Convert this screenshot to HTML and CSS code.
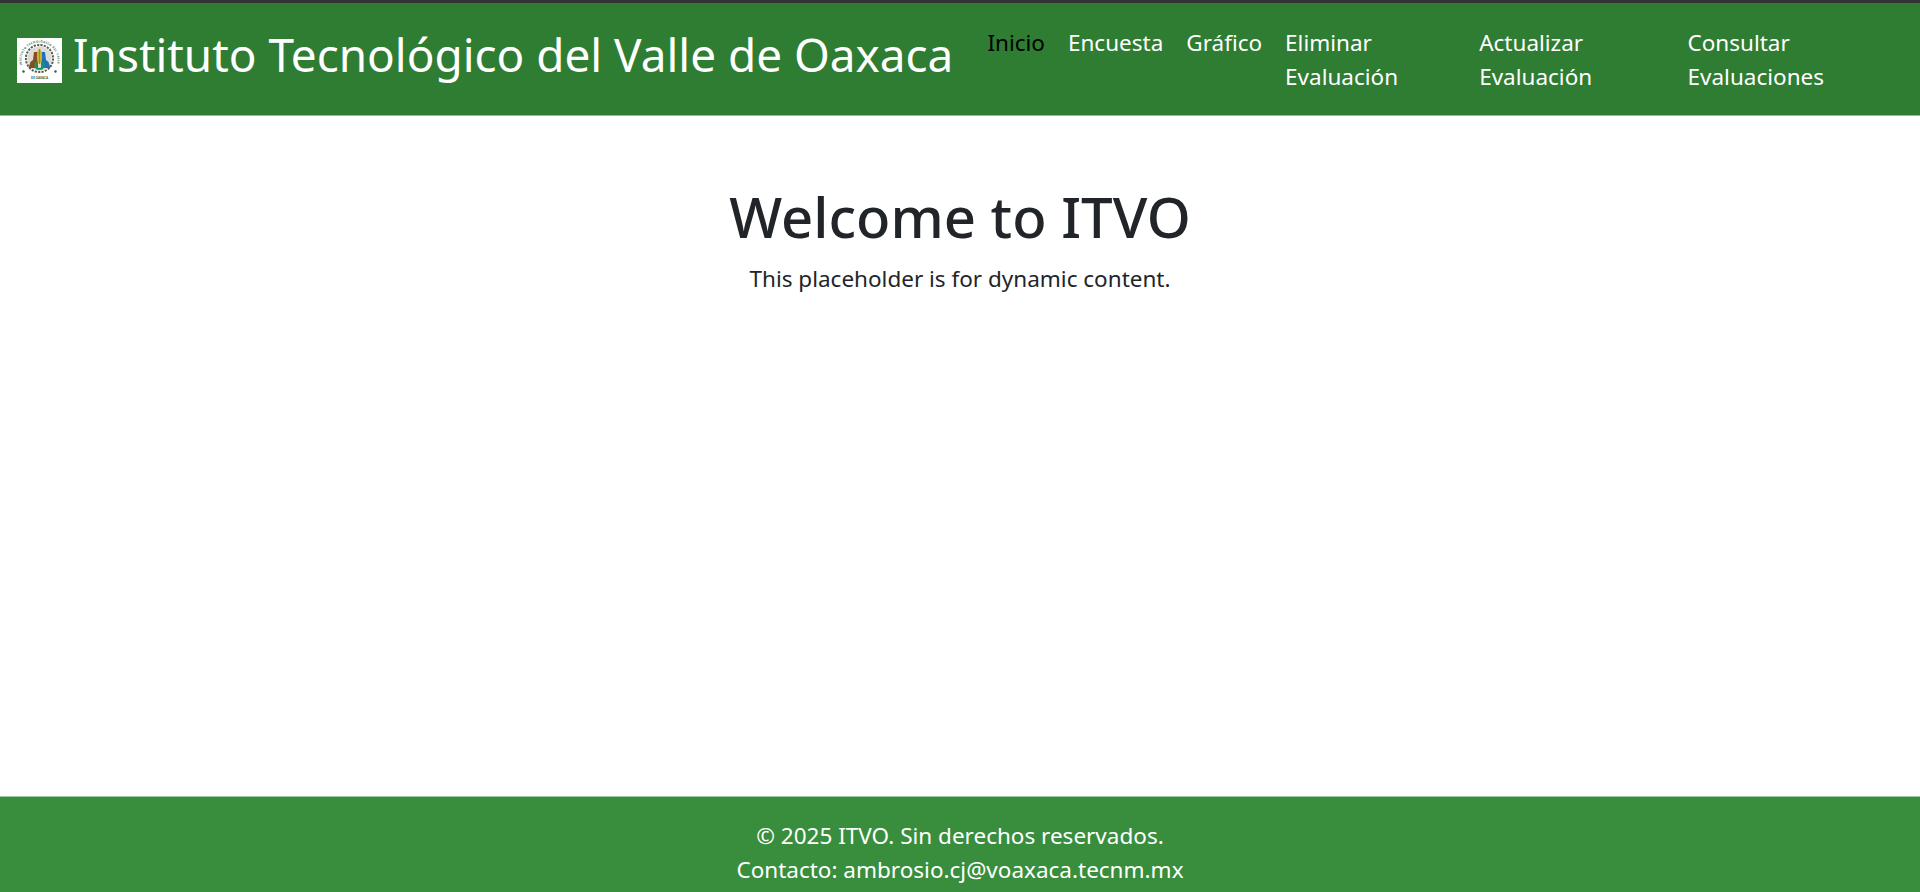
FILE: index.html
```html
<!DOCTYPE html>
<html lang="es">
<head>
<meta charset="utf-8">
<title>ITVO</title>
<link rel="stylesheet" href="styles.css">
</head>
<body>
<header class="site-header">
  <a class="brand" href="#">
    <svg class="logo" viewBox="0 0 45 45" width="45" height="45" aria-hidden="true">
      <rect width="45" height="45" fill="#fff"/>
      <defs><path id="ring" d="M5.1 27 A18 18 0 1 1 39.9 27"/></defs>
      <text class="logo-ring"><textPath href="#ring" textLength="64" lengthAdjust="spacing">INSTITUTO TECNOLÓGICO DEL VALLE</textPath></text>
      <circle cx="22.5" cy="20.5" r="13.6" fill="none" stroke="#5a5a55" stroke-width="2" stroke-dasharray="2.2 1.2"/>
      <circle cx="22.5" cy="20.5" r="12.2" fill="#dcdcd6"/>
      <path d="M11.5 30 L13.5 24 L16 22 L17 14 L20.5 14 L21 30 Z" fill="#8a4a20"/>
      <path d="M33.5 30 L31.5 24 L29 22 L28 14 L24.5 14 L24 30 Z" fill="#1e73b8"/>
      <path d="M18.5 24 V27 Q18.5 31 22.5 31 Q26.5 31 26.5 27 V24" fill="none" stroke="#159a58" stroke-width="2"/>
      <ellipse cx="22.5" cy="18.5" rx="2.6" ry="7.5" fill="#c9b23c"/>
      <path d="M22.5 11 V26" stroke="#7f8a3a" stroke-width=".8"/>
      <circle cx="6.5" cy="33.5" r="1.2" fill="#1a6b3c"/>
      <circle cx="38.5" cy="33.5" r="1.2" fill="#1a6b3c"/>
      <text class="logo-foot" x="22.5" y="41" text-anchor="middle">DE OAXACA</text>
    </svg>
    <span class="brand-name">Instituto Tecnológico del Valle de Oaxaca</span>
  </a>
  <nav class="main-nav">
    <a class="nav-link is-active" href="#">Inicio</a>
    <a class="nav-link" href="#">Encuesta</a>
    <a class="nav-link" href="#">Gráfico</a>
    <a class="nav-link" href="#">Eliminar Evaluación</a>
    <a class="nav-link" href="#">Actualizar Evaluación</a>
    <a class="nav-link" href="#">Consultar Evaluaciones</a>
  </nav>
</header>
<main class="content">
  <h1 class="welcome">Welcome to ITVO</h1>
  <p class="lead">This placeholder is for dynamic content.</p>
</main>
<footer class="site-footer">
  <p>© 2025 ITVO. Sin derechos reservados.</p>
  <p>Contacto: ambrosio.cj@voaxaca.tecnm.mx</p>
</footer>
</body>
</html>
```
FILE: styles.css
```css
* { box-sizing: border-box; }
html, body { margin: 0; height: 100%; }
body {
  display: flex;
  flex-direction: column;
  overflow: hidden;
  font-family: "Noto Sans", sans-serif;
  font-size: 22.5px;
  line-height: 1.5;
  color: #212529;
  background: #fff;
}
.site-header {
  flex: none;
  display: flex;
  align-items: flex-start;
  height: 116px;
  padding: 17px 29px 0 17px;
  gap: 34px;
  background: #2e7d32;
  border-top: 3px solid #333;
  border-bottom: 1px solid #93bd95;
}
.brand {
  flex: none;
  display: flex;
  align-items: center;
  gap: 11px;
  color: #fff;
  text-decoration: none;
}
.logo { display: block; margin-top: 12px; }
.logo-ring { font: 700 2.9px "Noto Sans", sans-serif; fill: #3a6b4a; }
.logo-foot { font: 700 3px "Noto Sans", sans-serif; fill: #3a6b4a; }
.brand-name { font-size: 45.9px; line-height: 1.5; }
.main-nav {
  flex: 1 1 auto;
  display: flex;
  gap: 23px;
  min-width: 0;
  margin-top: 6px;
}
.nav-link { color: #fff; text-decoration: none; }
.nav-link.is-active { color: #000; }
.content {
  flex: 1 1 auto;
  padding-top: 67px;
  text-align: center;
}
.welcome {
  margin: 0 0 11px;
  font-size: 56.25px;
  font-weight: 500;
  line-height: 1.2;
}
.lead { margin: 0; }
.site-footer {
  flex: none;
  height: 96px;
  padding-top: 22px;
  text-align: center;
  color: #fff;
  background: #388e3c;
  border-top: 1px solid #9fc9a1;
}
.site-footer p { margin: 0; }
```
